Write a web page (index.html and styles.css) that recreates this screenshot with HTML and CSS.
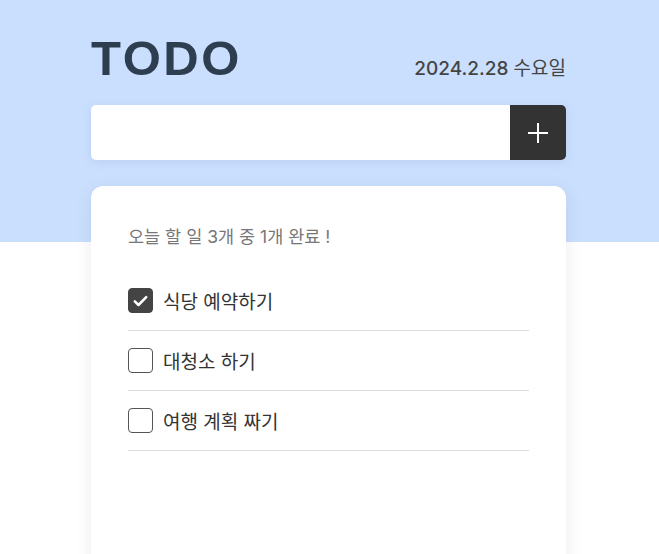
FILE: index.html
```html
<!DOCTYPE html>
<html lang="ko">
<head>
<meta charset="utf-8">
<link rel="stylesheet" href="styles.css">
</head>
<body>
<div class="page">
  <div class="container">
    <header class="header">
      <h1 class="title">TODO</h1>
      <div class="date">2024.2.28 <span class="day">수요일</span></div>
    </header>
    <form class="add-form">
      <input class="add-input" type="text">
      <button class="add-btn" type="button" aria-label="추가">
        <svg width="22" height="22" viewBox="0 0 22 22"><path d="M11 1v20M1 11h20" stroke="#fff" stroke-width="2" fill="none"/></svg>
      </button>
    </form>
    <section class="card">
      <p class="summary">오늘 할 일 3개 중 1개 완료 !</p>
      <ul class="list">
        <li class="item">
          <span class="box checked"><svg width="15" height="12" viewBox="0 0 15 12"><path d="M1.8 6.3l3.7 3.7L13.2 2.2" stroke="#fff" stroke-width="2.5" fill="none" stroke-linecap="round" stroke-linejoin="round"/></svg></span>
          <span class="label">식당 예약하기</span>
        </li>
        <li class="item">
          <span class="box"></span>
          <span class="label">대청소 하기</span>
        </li>
        <li class="item">
          <span class="box"></span>
          <span class="label">여행 계획 짜기</span>
        </li>
      </ul>
    </section>
  </div>
</div>
</body>
</html>
```
FILE: styles.css
```css
* { box-sizing: border-box; }
html, body { margin: 0; padding: 0; }
body {
  font-family: Inter, "Noto Sans CJK KR", sans-serif;
  background: #fff;
}
.page {
  height: 554px;
  padding-right: 2px;
  background: linear-gradient(#cadffe 0, #cadffe 242px, #fff 242px);
  overflow: hidden;
}
.container {
  width: 475px;
  margin: 0 auto;
}
.header {
  display: flex;
  justify-content: space-between;
  align-items: baseline;
  padding-top: 30px;
}
.title {
  margin: 0;
  font-family: "Liberation Sans", Arial, sans-serif;
  font-weight: 700;
  font-size: 49px;
  line-height: 56px;
  letter-spacing: 2.6px;
  color: #2c3e50;
}
.date {
  font-family: Inter, "Noto Sans CJK KR", sans-serif;
  font-size: 19px;
  font-weight: 500;
  color: #444;
}
.day {
  font-weight: 400;
}
.add-form {
  display: flex;
  height: 55px;
  margin-top: 19px;
  border-radius: 5px;
  overflow: hidden;
  box-shadow: 0 2px 10px rgba(80, 110, 160, 0.12);
}
.add-input {
  flex: 1;
  border: none;
  outline: none;
  background: #fff;
  font-size: 18px;
  padding: 0 16px;
}
.add-btn {
  width: 56px;
  border: none;
  background: #333;
  display: flex;
  align-items: center;
  justify-content: center;
  padding: 0;
}
.card {
  margin-top: 26px;
  min-height: 400px;
  background: #fff;
  border-radius: 12px;
  box-shadow: 0 4px 18px rgba(0, 0, 0, 0.08);
  padding: 39px 37px;
}
.summary {
  margin: 0;
  font-size: 17.5px;
  color: #777;
  line-height: 24px;
}
.list {
  list-style: none;
  margin: 22px 0 0;
  padding: 0;
}
.item {
  display: flex;
  align-items: center;
  gap: 10px;
  height: 60px;
  border-bottom: 1px solid #ddd;
}
.box {
  width: 25px;
  height: 25px;
  border: 1px solid #555;
  border-radius: 4px;
  display: flex;
  align-items: center;
  justify-content: center;
  background: #fff;
}
.box.checked {
  background: #444;
  border-color: #444;
}
.label {
  font-size: 19px;
  color: #333;
}
```
